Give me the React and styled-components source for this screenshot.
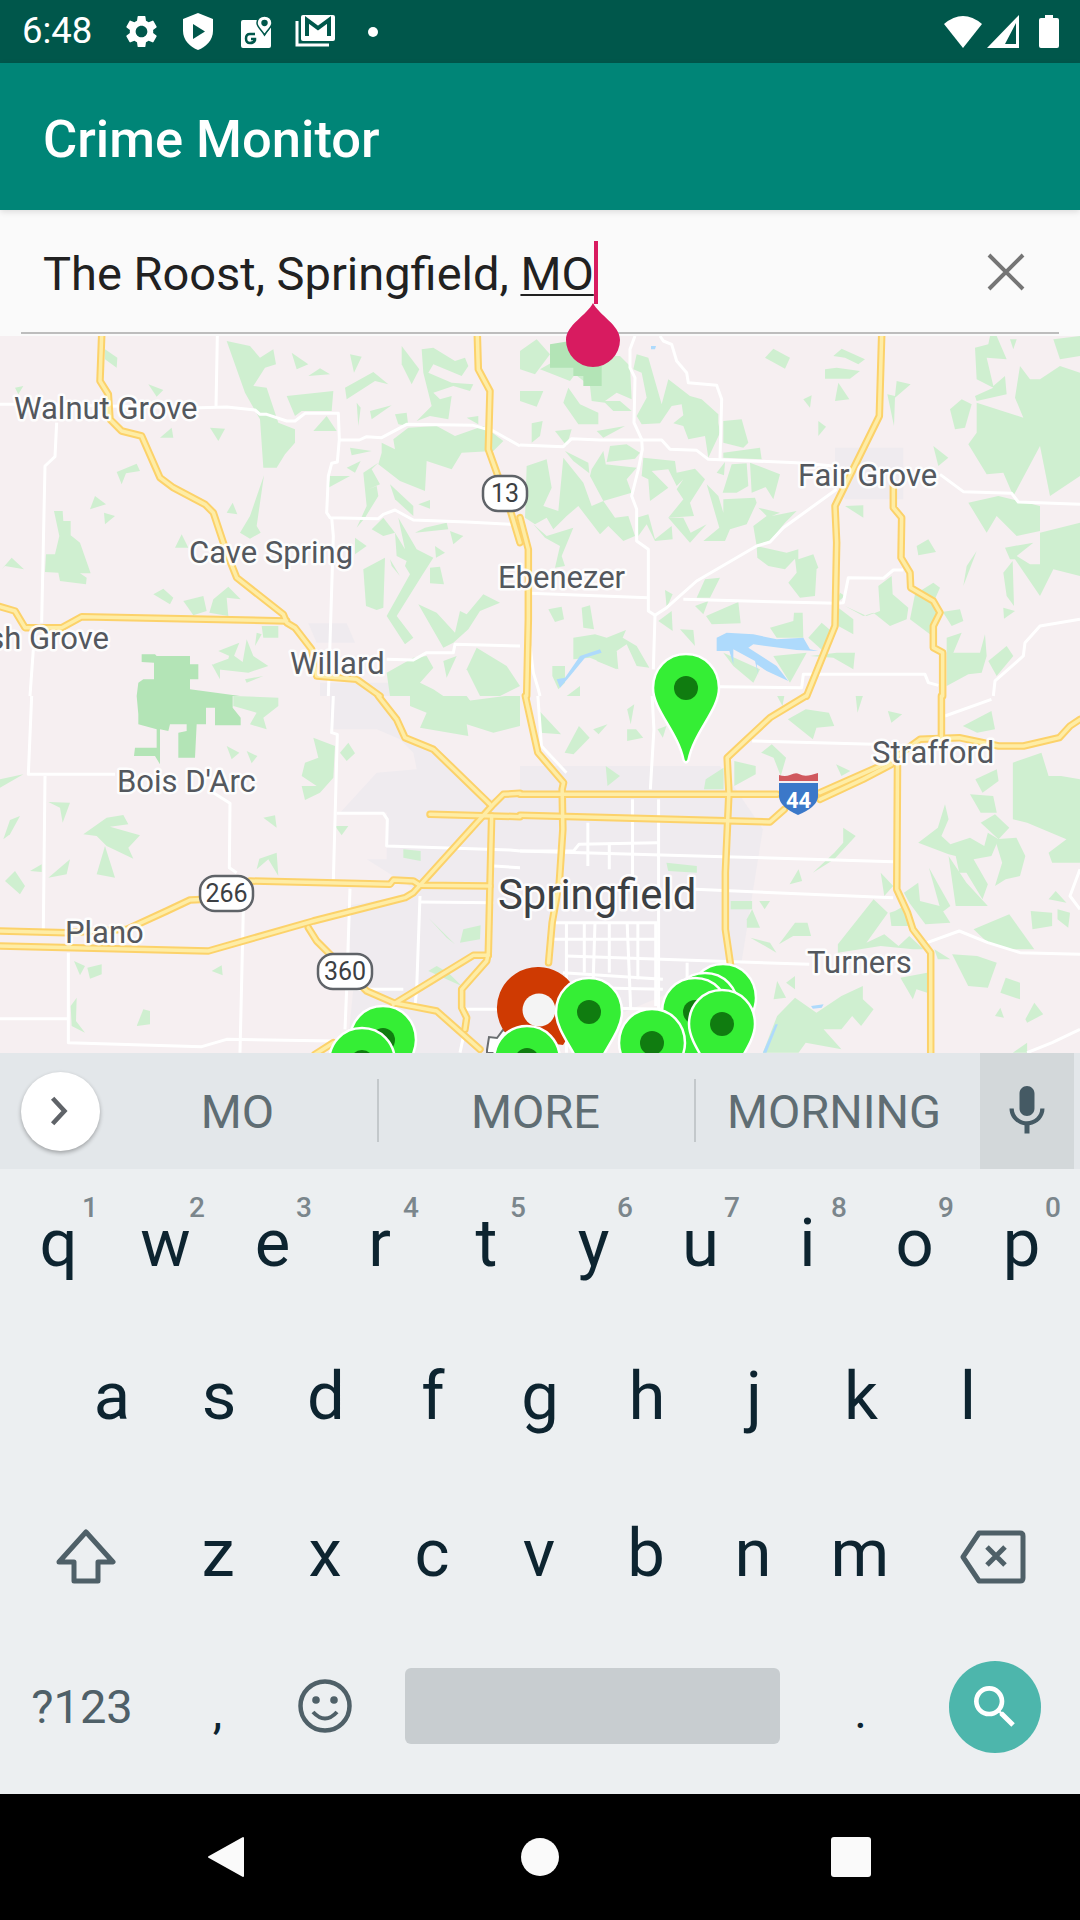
import React from "react";
import styled, { createGlobalStyle } from "styled-components";
import { MdSettings, MdMic, MdSearch } from "react-icons/md";

const GlobalStyle = createGlobalStyle`
  html, body { margin: 0; padding: 0; background: #000; }
  body { font-family: Roboto, "Liberation Sans", sans-serif; }
`;

const Phone = styled.div`
  width: 1080px;
  height: 1920px;
  display: flex;
  flex-direction: column;
  overflow: hidden;
`;

const StatusBar = styled.div`
  height: 63px;
  flex: none;
  background: #00574b;
  color: #fff;
  display: flex;
  align-items: center;
  padding: 0 21px 0 22px;
  box-sizing: border-box;
`;

const Clock = styled.span`
  font-size: 36.5px;
  width: 100px;
  margin-top: -2px;
`;

const NotifyIcons = styled.div`
  display: flex;
  align-items: center;
  gap: 22px;
  flex: 1;
`;

const SystemIcons = styled.div`
  display: flex;
  align-items: center;
  gap: 5px;
`;

const Toolbar = styled.div`
  height: 147px;
  flex: none;
  background: #008577;
  display: flex;
  align-items: center;
  padding: 4px 0 0 43px;
  box-sizing: border-box;
  color: #fff;
  font-size: 52.5px;
  font-weight: 500;
  position: relative;
  z-index: 2;
  box-shadow: 0 2px 6px rgba(0, 0, 0, 0.12);
`;

const SearchBar = styled.div`
  height: 126px;
  flex: none;
  background: #fafafa;
  position: relative;
  display: flex;
  align-items: center;
  padding: 0 55px 2px 43px;
  box-sizing: border-box;
  z-index: 1;
  &::after {
    content: "";
    position: absolute;
    left: 21px;
    right: 21px;
    bottom: 2px;
    height: 2px;
    background: #bdbdbd;
  }
`;

const SearchText = styled.div`
  flex: 1;
  font-size: 47px;
  color: #212121;
  line-height: 60px;
  margin-top: 3px;
`;

const Composing = styled.span`
  text-decoration: underline;
  text-decoration-thickness: 2px;
  text-underline-offset: 4px;
  position: relative;
`;

const Cursor = styled.span`
  position: absolute;
  right: -4px;
  top: -5px;
  bottom: -3px;
  width: 4px;
  background: #d81b60;
`;

const Handle = styled.svg`
  position: absolute;
  left: 566px;
  top: 93px;
  z-index: 3;
`;

const MapArea = styled.div`
  height: 717px;
  flex: none;
  background: #f6eff1;
  overflow: hidden;
  svg {
    display: block;
  }
`;

const Woods = styled.polygon`
  fill: #cfefd0;
`;
const Park = styled.polygon`
  fill: #b3e4b6;
`;
const Urban = styled.polygon`
  fill: #efebef;
`;
const Water = styled.polygon`
  fill: #aedafc;
`;
const Minor = styled.polyline`
  fill: none;
  stroke: #fff;
  stroke-width: 3px;
  stroke-linejoin: round;
  vector-effect: non-scaling-stroke;
`;
const RoadEdge = styled.polyline`
  fill: none;
  stroke: #fcd26a;
  stroke-width: 7.5px;
  stroke-linejoin: round;
  stroke-linecap: round;
  vector-effect: non-scaling-stroke;
`;
const RoadFill = styled.polyline`
  fill: none;
  stroke: #feeda6;
  stroke-width: 3.5px;
  stroke-linejoin: round;
  stroke-linecap: round;
  vector-effect: non-scaling-stroke;
`;
const Place = styled.text`
  font-family: Roboto, sans-serif;
  font-size: ${(p) => p.$size || 31}px;
  fill: ${(p) => (p.$size ? "#3c4043" : "#54585e")};
  stroke: #fff;
  stroke-width: 5px;
  stroke-opacity: 0.9;
  paint-order: stroke;
  stroke-linejoin: round;
`;
const ShieldBox = styled.rect`
  fill: #fff;
  stroke: #5f6368;
  stroke-width: 2.5px;
`;
const ShieldNum = styled.text`
  font-family: Roboto, sans-serif;
  font-size: ${(p) => p.$size || 25}px;
  fill: #3c4043;
  text-anchor: middle;
`;
const PinBody = styled.path`
  fill: #35ee35;
  stroke: #fff;
  stroke-width: 2.5px;
`;
const PinDot = styled.circle`
  fill: #107c10;
`;

const SuggestStrip = styled.div`
  height: 116px;
  flex: none;
  background: #e3e7ea;
  display: flex;
  align-items: stretch;
  padding-right: 6px;
  box-sizing: border-box;
  position: relative;
  z-index: 1;
`;

const ExpandSlot = styled.div`
  width: 100px;
  flex: none;
  display: flex;
  align-items: center;
  padding-left: 21px;
  box-sizing: border-box;
`;

const ExpandButton = styled.div`
  width: 79px;
  height: 79px;
  border-radius: 50%;
  background: #fff;
  box-shadow: 0 2px 4px rgba(0, 0, 0, 0.3);
  display: flex;
  align-items: center;
  justify-content: center;
  padding-right: 4px;
  box-sizing: border-box;
`;

const Suggestion = styled.div`
  width: ${(p) => p.$w}px;
  flex: none;
  display: flex;
  align-items: center;
  justify-content: center;
  font-size: 47px;
  color: #5f6d73;
  position: relative;
  padding-right: ${(p) => p.$shift || 4}px;
  box-sizing: border-box;
  ${(p) =>
    p.$divided &&
    `&::after {
      content: "";
      position: absolute;
      right: 0;
      top: 26px;
      bottom: 27px;
      width: 2px;
      background: #c3c8cb;
    }`}
`;

const MicSlot = styled.div`
  flex: 1;
  background: #d3d8da;
  display: flex;
  align-items: center;
  justify-content: center;
  color: #455a64;
`;

const Keyboard = styled.div`
  height: 625px;
  flex: none;
  background: #eceff1;
  display: flex;
  flex-direction: column;
`;

const KeyRow = styled.div`
  height: 155px;
  flex: none;
  display: flex;
  justify-content: center;
`;

const Key = styled.div`
  width: ${(p) => p.$w || 107}px;
  flex: none;
  height: 155px;
  line-height: ${(p) => 155 - 2 * (p.$lift || 0)}px;
  padding-bottom: ${(p) => (p.$center ? 2 * (p.$lift || 0) : 0)}px;
  box-sizing: border-box;
  text-align: center;
  font-size: ${(p) => p.$size || 67}px;
  color: ${(p) => p.$color || "#0d2430"};
  position: relative;
  display: ${(p) => (p.$center ? "flex" : "block")};
  align-items: center;
  justify-content: center;
`;

const Hint = styled.span`
  position: absolute;
  left: 77px;
  top: 23px;
  font-size: 28px;
  font-weight: 500;
  line-height: 32px;
  color: #7b868c;
`;

const SpaceBar = styled.div`
  width: 375px;
  height: 76px;
  background: #c8cdd0;
  border-radius: 6px;
`;

const SearchFab = styled.div`
  width: 92px;
  height: 92px;
  border-radius: 50%;
  background: #4db6ac;
  color: #fff;
  display: flex;
  align-items: center;
  justify-content: center;
  margin-right: 5px;
`;

const NavBar = styled.div`
  height: 126px;
  flex: none;
  background: #000;
  position: relative;
  display: grid;
  grid-template-columns: 207px 37px 276px 40px 271px 40px;
  align-items: center;
`;

const NavCell = styled.div`
  grid-column: ${(p) => p.$col};
  display: flex;
  justify-content: center;
`;

const RecentBtn = styled.div`
  width: 40px;
  height: 40px;
  border-radius: 3px;
  background: #fafafa;
`;

const HomeBtn = styled.div`
  width: 38px;
  height: 38px;
  border-radius: 50%;
  background: #fafafa;
`;

const TF = {
  a: "translate(0 336) scale(.33333)",
  b: "translate(520 336) scale(.33333)",
  c: "translate(0 696) scale(.33333)",
  d: "translate(520 696) scale(.35714 .33333)",
};

const panels = [
  {
    tf: TF.a,
    urban: ["925,862 1040,862 1065,920 950,920", "960,1040 1200,1040 1200,1080 960,1080"],
    park: ["425,955 465,955 470,960 570,960 570,985 595,985 595,1030 570,1030 570,1060 720,1080 410,1080 415,1040 430,1030 462,1030 462,980 425,978"],
    green: [
      "680,15 750,30 780,65 820,40 828,85 795,95 760,150 800,155 835,260 885,280 885,320 855,355 830,395 790,395 780,250 735,170",
      "860,180 1000,165 995,225 905,225 885,240", "875,50 925,85 890,100", "925,120 960,97 990,115", "1050,55 1085,62 1062,110",
      "1035,155 1120,108 1165,145 1125,135 1040,190", "1205,30 1258,100 1235,145 1205,85",
      "1265,40 1300,35 1365,75 1395,65 1405,90 1385,120 1300,85 1285,110 1355,140 1420,145 1410,165 1360,150 1300,170 1320,190 1355,180 1345,250 1290,240 1250,255 1295,210 1270,110",
      "1070,200 1082,215 1075,270", "1110,225 1175,208 1115,250", "940,285 980,240 1010,285", "1185,235 1220,230 1225,270 1195,265", "1400,245 1435,240 1435,265",
      "480,305 515,275 520,305", "630,275 675,278 655,315", "350,408 410,383 420,405 378,412 365,445", "270,520 285,480 318,505", "312,530 345,540 315,565",
      "680,530 698,500 712,535", "720,590 750,540 792,418 770,570 782,590 750,608",
      "162,525 188,525 190,555 212,555 212,598 240,620 272,712 240,712 260,725 258,745 180,735 175,710 135,708 138,655 165,655 178,600",
      "5,700 35,665 72,700 15,690", "45,155 70,150 55,175", "445,145 490,162 470,182", "315,40 352,65 350,95 315,70", "525,635 545,595 565,635",
      "460,775 490,758 520,785 510,805", "550,795 610,780 620,825 580,838", "628,830 640,790 685,752 722,790 680,785 685,840",
      "1050,335 1115,345 1055,358", "1040,395 1082,375 1065,410",
      "1145,320 1185,340 1180,310 1225,275 1310,270 1365,300 1450,270 1510,315 1480,345 1385,350 1355,400 1280,375 1275,465 1200,435 1135,385 1145,350",
      "990,420 1050,420 985,455", "1090,410 1135,380 1115,400 1140,445 1105,460 1130,450 1135,480 1095,545 1070,575 1100,510",
      "1170,445 1240,510 1240,540 1185,490", "1255,505 1290,492 1290,518", "1115,580 1150,545 1185,590 1150,600",
      "1185,590 1215,640 1195,545 1250,640 1300,665 1265,720 1190,840 1240,905 1215,925 1160,840 1230,715 1215,690 1220,675 1190,660",
      "1245,590 1275,575 1340,560 1345,580", "1360,625 1390,600 1350,585", "1065,605 1100,630 1065,655", "1305,630 1335,650 1308,665", "1170,670 1200,720 1175,690",
      "1090,700 1155,665 1150,815 1130,822 1098,810", "1290,695 1320,692 1332,745 1290,742",
      "1255,805 1310,830 1365,890 1380,825 1400,835 1450,775 1500,800 1440,825 1405,880 1360,920 1330,935",
      "1160,1010 1240,965 1280,960 1300,995 1260,1040 1300,1060 1330,1080 1170,1080", "1330,975 1370,960 1340,1025", "1400,1000 1430,935 1520,990 1560,1050 1500,1080 1440,1080",
      "655,945 718,920 700,965", "640,985 685,968 690,950 728,978 740,910 760,960 805,990 745,1010 650,1000", "635,985 660,1030 660,990", "735,1030 790,1020 740,1040",
      "785,870 835,870 835,905 805,905 790,905", "770,890 785,895 765,930",
    ],
    white: [
      "652,0 648,215",
      "0,205 40,205 600,215 680,213 765,222 780,235 800,235 860,255 885,255 915,232 1015,232 1018,310 1012,378 995,382 985,420 980,530 990,545 1135,548 1150,535 1185,522 1240,552 1400,558 1535,565",
      "170,260 165,362 135,390 125,860", "1018,312 1078,312 1100,302 1145,305 1220,265 1420,268 1480,285 1560,330",
      "995,545 1000,600 985,1080", "1160,970 1240,972 1280,950 1360,950 1365,925 1560,930", "100,940 90,1080",
    ],
    yellow: [
      "305,0 300,135 325,175 330,250 365,285 425,300 480,425 520,455 615,505 640,530 680,650 710,725 850,835 860,860 885,875 935,940 950,1020 1070,1030 1140,1080",
      "0,812 45,825 75,875 185,875 245,842 860,855",
      "1432,0 1435,100 1470,165 1465,340 1530,520 1560,620",
    ],
  },
  {
    tf: TF.b,
    urban: ["945,335 1150,335 1150,490 975,490 945,440"],
    green: [
      "60,100 130,60 300,60 330,90 335,190 290,170 255,195 300,195 335,225 280,225 255,200 215,195 210,150 165,115 150,135",
      "0,45 50,10 90,55 45,115 0,100", "0,165 70,165 50,212 0,195", "130,200 145,155 180,205 235,230 235,265 175,265", "35,262 68,255 60,300 35,320", "105,285 155,280 140,330", "230,285 315,270 250,305",
      "350,55 385,65 425,205 445,130 510,180 545,190 595,235 595,260 600,290 565,365 555,300 505,310 490,270 460,262 490,238 485,205 455,210 420,262 365,265 350,240 380,185 365,110 340,100",
      "610,255 665,250 685,320 670,335 610,320", "610,350 720,335 725,370 610,365", "735,65 760,38 810,65 795,98", "940,60 965,38 1035,70 1015,85 975,65", "915,100 950,95 1020,105 990,128 915,128",
      "945,195 955,140 988,190", "850,190 875,178 870,215", "895,255 918,272 895,300", "1130,135 1172,145 1125,185 1122,270 1102,175 1125,180", "1240,330 1285,365 1255,390", "1290,220 1325,190 1355,205 1335,275 1305,280",
      "1365,35 1405,25 1410,0 1430,0 1460,70 1400,65 1420,150 1455,120 1460,175 1370,195 1365,180 1420,155 1370,130",
      "1370,200 1510,245 1485,185 1500,90 1530,130 1560,130 1560,330 1480,480 1450,410 1400,415 1345,325 1370,290", "1470,10 1490,10 1480,40",
      "1560,130 1620,90 1680,110 1680,420 1590,480 1560,330", "1560,590 1680,560 1680,720 1600,700 1560,780", "1600,10 1680,0 1680,60 1620,70",
      "135,345 205,380 208,412 160,375", "270,330 320,325 360,350 345,368 260,378", "255,385 350,395 320,430 335,470 250,495 210,420 215,400 250,345 260,400",
      "370,365 465,375 470,410 525,398 555,430 510,500 522,540 445,545 490,490 470,460 490,430 470,450 445,400 395,405 445,455 390,495 385,430 365,420",
      "590,410 615,378 612,418", "635,385 680,382 685,450 650,470 608,470", "690,380 780,415 760,490 735,450 695,430 745,450 695,470",
      "610,490 705,485 710,500 680,565 630,580 615,615 550,615 598,575 560,445 595,480 610,530", "715,515 780,530 755,540 830,525 795,560 750,615 710,630 700,570 740,540",
      "20,390 80,370 95,455 70,510 115,525 130,365 190,440 215,510 250,495 285,545 325,540 345,600 310,615 265,570 240,595 175,510 140,540 100,580 80,545 45,565 15,545",
      "40,565 80,600 160,575 125,660 135,690 105,695 120,630 75,605", "350,545 385,535 405,610 455,570 458,610 405,615 380,565 355,600", "445,545 490,545 512,590 560,565 510,620",
      "975,510 1030,508 1030,545", "1190,630 1225,610 1248,648 1195,658",
      "710,630 800,650 835,640 835,670 880,655 895,695 830,745 890,695 885,780 840,785 805,740 830,710 825,668 795,700 745,690 712,665",
      "530,785 555,730 600,725 570,785", "525,810 565,795 550,835", "435,762 458,775 440,815", "415,855 455,825 458,885", "480,880 520,882 525,930", "85,820 125,812 132,850 105,858", "185,815 210,808 222,880 190,875",
      "558,840 655,798 662,862 575,865", "160,905 225,895 260,905 318,882 308,905 350,930 388,995 350,990 320,925 290,945 295,1000 210,965 160,970", "97,990 135,990 135,1040 115,1060 97,1020", "180,1050 140,1080 180,1080",
      "750,875 820,855 822,830 848,830 850,905 770,905", "865,905 905,860 940,890 915,950", "960,770 975,780 950,800", "955,815 1000,850 1000,895 955,870",
      "975,810 1040,840 1080,825 1075,750 1115,720 1118,775 1165,815 1160,850 1110,870 1060,830 1030,840",
      "1170,850 1185,775 1240,740 1260,755 1240,800 1250,830 1320,820 1330,855 1295,870 1270,830 1240,880 1230,895",
      "1330,750 1370,645 1340,690", "1450,710 1478,675 1482,810 1460,780", "1450,815 1485,825 1452,848", "1455,635 1540,620 1490,660 1530,685 1560,685 1560,780 1485,670 1470,670",
      "1490,600 1560,585 1560,510 1435,480 1345,500 1400,590 1430,540", "1280,905 1325,890 1300,950 1380,950 1395,895 1400,960 1385,1010 1345,1015 1280,1050 1280,1000", "1405,975 1460,930 1480,960 1430,1020",
      "610,950 720,1000 700,1040 640,990", "760,960 860,950 810,1040", "870,960 950,950 1005,950 1000,1000 940,965", "235,950 290,948 290,1000 230,975",
    ],
    park: ["90,25 150,15 160,60 245,90 245,150 190,150 190,120 160,120 160,95 90,95"],
    water: [
      "590,905 620,890 700,895 770,910 850,905 870,940 895,945 830,942 700,925 685,935 770,990 805,1035 740,1005 710,985 715,1018 705,975 640,940 640,985 628,945 590,945",
      "110,1030 135,1025 180,960 240,940 245,950 195,965 150,1020 120,1055", "393,30 408,30 405,40 393,40",
    ],
    white: [
      "0,327 130,332 155,308 240,312 425,312 450,340 530,343 565,370 830,380 940,390",
      "345,0 330,40 330,95 345,125 342,260 365,310 367,340 355,400 335,480 350,520 350,615 385,640 385,825 405,838 440,815 530,735 710,630 750,618 790,575 950,460",
      "420,0 430,15 455,25 470,75 500,110 505,140 590,148 605,190 600,370", "1260,415 1330,467 1475,472 1495,498 1680,505",
      "30,772 385,785", "490,790 950,802 970,800 985,725 1090,727 1120,702 1150,702", "405,838 400,1000",
      "600,1052 845,1055 850,1015 1215,1015 1225,1040 1255,1048", "30,930 40,1010 55,1060 60,1080", "1420,1080 1425,1035 1510,960 1515,920 1560,870 1680,850",
    ],
    yellow: [
      "0,545 25,640 25,850 20,1080", "1085,0 1078,240 945,510 950,620 945,870 860,1080",
      "1120,450 1120,515 1145,545 1143,665 1170,710 1172,755 1240,795 1260,830 1240,870 1240,935 1268,950 1268,1080",
    ],
  },
  {
    tf: TF.c,
    urban: ["990,0 1130,0 1180,60 1210,120 1300,160 1470,310 1560,290 1560,1080 1040,1080 1060,880 1040,630 1260,590 1100,490 1160,490 1160,350 1020,350 1130,230 1250,220 1240,170 1200,130 1130,100 990,100"],
    park: ["410,0 698,0 698,35 722,65 722,88 645,88 645,35 618,35 618,85 590,85 585,185 535,185 535,110 560,105 560,85 510,85 505,105 480,100 480,205 465,180 402,180 405,155 470,155 470,100 415,85 415,55"],
    green: [
      "700,0 835,5 835,30 790,65 800,100 750,85 770,50 700,30", "680,150 718,170 695,190", "740,165 772,180 755,202",
      "1230,0 1400,0 1440,55 1400,15 1515,0 1560,0 1560,90 1480,110 1400,85 1405,120 1260,95 1280,50 1230,30",
      "940,125 1005,150 1000,245 960,290 915,312 905,270 950,270 905,240 915,200 955,185", "1020,170 1045,140 1065,172 1040,195", "0,250 70,235 0,275", "145,318 210,320 188,380 180,335", "10,430 30,372 60,360 30,415",
      "250,415 320,365 370,357 385,385 330,392 420,418 385,455 400,488 320,450 290,420", "290,535 315,450 345,545", "145,545 210,490 200,535", "90,525 125,505 125,528", "15,555 45,525 75,570 60,595",
      "790,365 825,358 830,395", "1005,390 1045,390 1025,418", "770,520 778,488 830,470 835,540 805,490", "1210,460 1262,465 1262,495 1210,485", "1285,665 1365,745 1340,725", "1380,740 1390,700 1442,688 1440,730",
      "222,795 255,810 240,838", "262,815 305,805 305,835 270,848", "635,825 665,808 668,838", "212,930 230,905 228,975 255,1010 215,990", "410,990 430,940 450,945 450,985", "1285,825 1310,810 1345,830 1385,870 1340,850",
    ],
    white: [
      "95,0 85,235 345,235", "640,290 690,322 688,515 710,530", "135,240 130,700", "1000,0 995,110 1012,115 1000,555", "1010,352 1150,352 1162,370 1160,450 1530,462 1560,465",
      "1050,578 1040,880 1035,1000", "1260,600 1250,880 1245,930", "1262,618 1480,620", "730,640 720,1070", "205,770 205,1040 605,1052 680,1030 1000,1035", "0,968 205,968", "1040,880 1210,880", "1390,940 1500,940", "1380,1070 1395,1000", "1480,510 1560,515",
    ],
    yellow: [
      "1135,0 1190,70 1215,125 1300,160 1470,325", "1290,355 1560,362",
      "1560,292 1510,295 1480,325 1240,590 1215,605 940,675 625,765 0,750", "0,705 200,710 380,700 500,645 570,612 620,610",
      "750,555 1170,565 1180,552 1240,555 1260,568 1470,570", "1475,360 1465,770 1460,795 1385,880 1385,935 1400,965 1395,1000",
      "925,695 950,735 1000,785 1100,885 1180,920 1310,945 1440,1060", "1465,778 1420,778 1180,925", "1000,1040 945,1075",
    ],
  },
  {
    tf: TF.d,
    urban: ["0,210 560,210 680,400 620,800 0,1080"],
    green: [
      "300,40 320,25 310,85", "125,170 165,90 195,125 150,175", "205,100 245,85 220,115", "300,100 325,100 345,125 300,135", "385,100 410,90 400,125", "50,40 115,115 55,110", "240,210 280,240 245,270",
      "520,250 570,215 570,280 515,280", "600,195 660,210 660,235 600,270", "675,170 705,145 745,185 730,240 710,185", "885,205 925,225 900,240", "750,70 800,40 865,50 880,90 830,95 820,130", "1030,45 1070,55 1040,80",
      "940,0 960,0 945,50", "720,0 740,0 735,30", "1240,90 1320,45 1330,100 1280,110", "1380,200 1460,170 1480,240 1515,240 1568,250 1568,500 1490,500 1480,470 1530,430 1420,380 1380,370",
      "1275,250 1335,220 1340,255 1295,290", "1260,295 1325,300 1335,350 1290,350", "1115,440 1170,395 1190,325 1200,370 1180,420 1205,445 1260,425 1300,450 1310,410 1340,430 1320,480 1270,490 1310,565 1295,610 1250,530 1230,530 1220,480 1200,475",
      "1290,380 1330,355 1370,395 1340,430", "1330,430 1390,425 1415,480 1400,540 1360,550 1330,570 1350,500", "1200,480 1220,630 1310,630 1250,560", "1010,530 1045,570 1020,600", "1075,590 1115,560 1120,615 1175,630 1205,680 1135,685 1090,620",
      "1145,515 1205,630 1180,650", "1035,650 1050,645 1075,630 1090,690 1040,690", "890,745 990,610 1030,650 970,740 1020,715 1060,750 1090,720 1130,760 1100,760 1010,750 890,770", "1160,760 1205,790 1170,790",
      "1270,700 1370,655 1440,760 1370,760 1310,740", "1430,645 1490,650 1490,690 1435,700", "1505,640 1540,650 1535,695 1505,670", "1480,610 1500,585 1530,620", "1210,775 1280,780 1335,800 1310,875 1255,870",
      "1360,845 1400,860 1400,910 1345,890", "1330,960 1345,935 1355,965", "1415,970 1440,920 1465,955 1420,980", "820,530 880,470 905,440 905,395 940,420 880,490", "755,565 780,520 790,555", "725,745 770,680 805,680 815,720 765,720",
      "645,725 700,740 718,770", "590,615 650,615 650,640 590,640", "670,615 700,615 685,640", "635,670 650,640 672,695 635,695", "410,500 495,510 495,530 415,525", "710,910 720,855 745,905", "745,860 770,840 770,880",
      "720,960 770,905 830,950 900,900 960,870 960,910 990,940 955,990 930,960 900,1000 850,1000 900,1060 800,1040 780,1070 680,1070", "1065,845 1140,830 1140,890 1110,880 1100,910", "1380,1070 1420,1040 1420,1070",
    ],
    water: ["815,930 850,925 845,935 820,938", "680,1070 715,985 722,985 690,1070"],
    white: [
      "370,0 375,100 365,280", "50,0 60,150 130,230", "0,465 150,465 165,445 385,440", "0,465 570,482 1045,497", "490,580 1045,605", "190,380 190,510", "250,440 250,520", "315,310 315,540", "388,310 388,1000",
      "130,680 130,1070", "180,680 180,830", "210,680 205,850", "250,680 250,830", "300,680 310,940", "330,680 330,850", "380,680 380,930", "100,680 385,680", "130,780 810,805", "120,830 400,850", "90,730 380,730",
      "100,873 400,880", "100,933 400,940", "468,800 468,900",
      "650,135 990,145", "1140,740 1230,705 1310,740 1400,770 1568,775", "1190,60 1320,10", "1420,1070 1490,1040 1568,1000", "1568,520 1540,600 1568,640",
    ],
    yellow: [
      "15,0 50,170 122,260 118,280 120,400 110,560 90,680 80,800", "0,295 720,295", "0,358 700,378 740,340", "800,0 700,65 630,135 580,185 585,290 575,530 575,700 590,810", "1180,0 1180,120",
      "840,290 1030,200 1120,130 1230,125 1340,150 1410,150 1510,125 1540,90 1568,70", "840,310 960,250 1040,205", "1057,200 1055,580 1085,650 1100,700 1150,770 1150,1070",
    ],
  },
];

const layer = (key, Shape) =>
  panels.map((p, i) => (
    <g key={key + i} transform={p.tf}>
      {(p[key] || []).map((pts, j) => (
        <Shape key={j} points={pts} />
      ))}
    </g>
  ));

const places = [
  ["Walnut Grove", 14, 419],
  ["Cave Spring", 189, 563],
  ["Ebenezer", 498, 588],
  ["Fair Grove", 798, 486],
  ["Ash Grove", -32, 649],
  ["Willard", 290, 674],
  ["Bois D'Arc", 117, 792],
  ["Strafford", 872, 763],
  ["Plano", 65, 943],
  ["Turners", 807, 973],
];

const PIN = "M0 -34C19 -34 33 -19 33 0C33 22 8 44 2.5 72Q0 77 -2.5 72C-8 44 -33 22 -33 0C-33 -19 -19 -34 0 -34Z";

const Pin = ({ x, y }) => (
  <g transform={`translate(${x} ${y})`}>
    <PinBody d={PIN} />
    <PinDot r="12" />
  </g>
);

const Shield = ({ x, y, w, label }) => (
  <g>
    <ShieldBox x={x} y={y} width={w} height="35" rx="15" />
    <ShieldNum x={x + w / 2} y={y + 26}>{label}</ShieldNum>
  </g>
);

const MapView = () => (
  <svg width="1080" height="717" viewBox="0 336 1080 717">
    {layer("urban", Urban)}
    {layer("green", Woods)}
    {layer("park", Park)}
    {layer("water", Water)}
    {layer("white", Minor)}
    {layer("yellow", RoadEdge)}
    {layer("yellow", RoadFill)}
    {places.map(([name, x, y]) => (
      <Place key={name} x={x} y={y}>{name}</Place>
    ))}
    <Place x="498" y="909" $size="41.8">Springfield</Place>
    <Shield x={483} y={476} w={44} label="13" />
    <Shield x={200} y={876} w={53} label="266" />
    <Shield x={318} y={954} w={54} label="360" />
    <g>
      <path d="M779 781V775Q785 777 790 775Q796 772 799 774Q804 777 811 775L818 773V781Z" fill="#d0585e" />
      <path d="M779 783H818V797Q817 807 798 815Q780 807 779 797Z" fill="#3b78c9" />
      <text x="798.5" y="808" fontFamily="Roboto, sans-serif" fontWeight="700" fontSize="22" fill="#fff" textAnchor="middle">44</text>
    </g>
    <path d="M487 1050L489 1037L497 1038L503 1030L515 1034L515 1053L487 1053Z" fill="#fff" stroke="#6a6d70" strokeWidth="2" />
    <Pin x={686} y={688} />
    <g>
      <path d="M539 967A41 41 0 0 0 510 1038L563 1045L575 1026A41 41 0 0 0 539 967Z" fill="#cf3a02" />
      <circle cx="539" cy="1010" r="16.5" fill="#f4f4f4" />
    </g>
    <Pin x={383} y={1040} />
    <Pin x={362} y={1062} />
    <Pin x={527} y={1060} />
    <Pin x={589} y={1012} />
    <Pin x={723} y={998} />
    <Pin x={705} y={1007} />
    <Pin x={695} y={1012} />
    <Pin x={652} y={1043} />
    <Pin x={722} y={1024} />
  </svg>
);

const row1 = ["q", "w", "e", "r", "t", "y", "u", "i", "o", "p"];
const digits = ["1", "2", "3", "4", "5", "6", "7", "8", "9", "0"];
const row2 = ["a", "s", "d", "f", "g", "h", "j", "k", "l"];
const row3 = ["z", "x", "c", "v", "b", "n", "m"];

const App = () => (
  <Phone>
    <GlobalStyle />
    <StatusBar>
      <Clock>6:48</Clock>
      <NotifyIcons>
        <MdSettings size={39} />
        <svg width="30" height="37" viewBox="0 0 30 37">
          <path d="M15 0L30 6V18C30 27 23 34 15 37C7 34 0 27 0 18V6Z" fill="#fff" />
          <path d="M10 11L22 18.5L10 26Z" fill="#00574b" />
        </svg>
        <svg width="32" height="34" viewBox="0 0 32 34" style={{ marginLeft: 6 }}>
          <path d="M2 5H18L24 20L30 12V31Q30 33 28 33H2Q0 33 0 31V7Q0 5 2 5Z" fill="#fff" />
          <path fillRule="evenodd" d="M23.5 1C28 1 31 4 31 8C31 12 26.5 15 23.5 20C20.500 15 16 12 16 8C16 4 19 1 23.5 1ZM23.500 5.500A2.500 2.500 0 1 0 23.500 10.500A2.500 2.500 0 1 0 23.500 5.500Z" fill="#fff" stroke="#00574b" strokeWidth="1.500" />
          <path d="M14 19H9Q5 19 5 23.500Q5 28 9 28Q13 28 14 25V24H10" fill="none" stroke="#00574b" strokeWidth="2.500" />
        </svg>
        <svg width="40" height="33" viewBox="0 0 40 33" style={{ marginLeft: 0 }}>
          <path d="M2 6V30H34" fill="none" stroke="#fff" strokeWidth="3" />
          <path d="M8 0H38Q40 0 40 2V24Q40 26 38 26H8Q6 26 6 24V2Q6 0 8 0Z" fill="#fff" />
          <path d="M12 21V5L23 13L34 5V21" fill="none" stroke="#00574b" strokeWidth="4" />
        </svg>
        <svg width="10" height="10" viewBox="0 0 10 10" style={{ marginLeft: 11 }}>
          <circle cx="5" cy="5" r="5" fill="#fff" />
        </svg>
      </NotifyIcons>
      <SystemIcons>
        <svg width="38" height="32" viewBox="0 0 38 32">
          <path d="M0 8Q19 -8 38 8L19 32Z" fill="#fff" />
        </svg>
        <svg width="33" height="33" viewBox="0 0 33 33" style={{ marginRight: 14 }}>
          <path fillRule="evenodd" d="M32 0V33H0ZM29 8L18 29H29Z" fill="#fff" />
        </svg>
        <svg width="20" height="33" viewBox="0 0 20 33">
          <path d="M6 0H14V3H18Q20 3 20 5V31Q20 33 18 33H2Q0 33 0 31V5Q0 3 2 3H6Z" fill="#fff" />
        </svg>
      </SystemIcons>
    </StatusBar>
    <Toolbar>Crime Monitor</Toolbar>
    <SearchBar>
      <SearchText>
        The Roost, Springfield, <Composing>MO<Cursor /></Composing>
      </SearchText>
      <svg width="38" height="38" viewBox="0 0 38 38">
        <path d="M2 2L36 36M36 2L2 36" stroke="#757575" strokeWidth="4" />
      </svg>
      <Handle width="54" height="64" viewBox="0 0 54 64">
        <path d="M27 0C33 12 54 22 54 37A27 27 0 0 1 0 37C0 22 21 12 27 0Z" fill="#d81b60" />
      </Handle>
    </SearchBar>
    <MapArea>
      <MapView />
    </MapArea>
    <SuggestStrip>
      <ExpandSlot>
        <ExpandButton>
          <svg width="20" height="32" viewBox="0 0 22 34">
            <path d="M4 3L17 17L4 31" fill="none" stroke="#5f6368" strokeWidth="5" />
          </svg>
        </ExpandButton>
      </ExpandSlot>
      <Suggestion $w={279} $divided>MO</Suggestion>
      <Suggestion $w={317} $divided>MORE</Suggestion>
      <Suggestion $w={284} $shift={8}>MORNING</Suggestion>
      <MicSlot>
        <MdMic size={60} />
      </MicSlot>
    </SuggestStrip>
    <Keyboard>
      <KeyRow>
        {row1.map((k, i) => (
          <Key key={k} $lift={3}>
            {k}
            <Hint>{digits[i]}</Hint>
          </Key>
        ))}
      </KeyRow>
      <KeyRow>
        {row2.map((k) => (
          <Key key={k} $lift={5}>{k}</Key>
        ))}
      </KeyRow>
      <KeyRow>
        <Key $w={164} $center>
          <svg width="60" height="56" viewBox="0 0 60 56" style={{ marginLeft: 6 }}>
            <path d="M30 3L57 33H42V52H18V33H3Z" fill="none" stroke="#4f6068" strokeWidth="5" strokeLinejoin="round" />
          </svg>
        </Key>
        {row3.map((k) => (
          <Key key={k} $lift={3}>{k}</Key>
        ))}
        <Key $w={166} $center>
          <svg width="66" height="54" viewBox="0 0 66 54" style={{ marginRight: 8 }}>
            <path d="M19 3H60Q63 3 63 6V48Q63 51 60 51H19L3 27Z" fill="none" stroke="#4f6068" strokeWidth="5" strokeLinejoin="round" />
            <path d="M27 17L45 35M45 17L27 35" fill="none" stroke="#4f6068" strokeWidth="5" />
          </svg>
        </Key>
      </KeyRow>
      <KeyRow>
        <Key $w={164} $size={47} $color="#4f6068" $lift={5}>?123</Key>
        <Key $size={48}>,</Key>
        <Key $center $lift={6}>
          <svg width="54" height="54" viewBox="0 0 54 54">
            <circle cx="27" cy="27" r="24.5" fill="none" stroke="#4f6068" strokeWidth="4.5" />
            <circle cx="18" cy="21" r="3.8" fill="#4f6068" />
            <circle cx="36" cy="21" r="3.8" fill="#4f6068" />
            <path d="M15 33Q27 46 39 33" fill="none" stroke="#4f6068" strokeWidth="4" />
          </svg>
        </Key>
        <Key $w={429} $center $lift={6}>
          <SpaceBar />
        </Key>
        <Key $size={48}>.</Key>
        <Key $w={166} $center $lift={5}>
          <SearchFab>
            <MdSearch size={56} />
          </SearchFab>
        </Key>
      </KeyRow>
    </Keyboard>
    <NavBar>
      <NavCell $col={2}>
        <svg width="37" height="42" viewBox="0 0 37 42">
          <path d="M36 2V40L2 21Z" fill="#fafafa" stroke="#fafafa" strokeWidth="2" strokeLinejoin="round" />
        </svg>
      </NavCell>
      <NavCell $col={4}>
        <HomeBtn />
      </NavCell>
      <NavCell $col={6}>
        <RecentBtn />
      </NavCell>
    </NavBar>
  </Phone>
);

export default App;
